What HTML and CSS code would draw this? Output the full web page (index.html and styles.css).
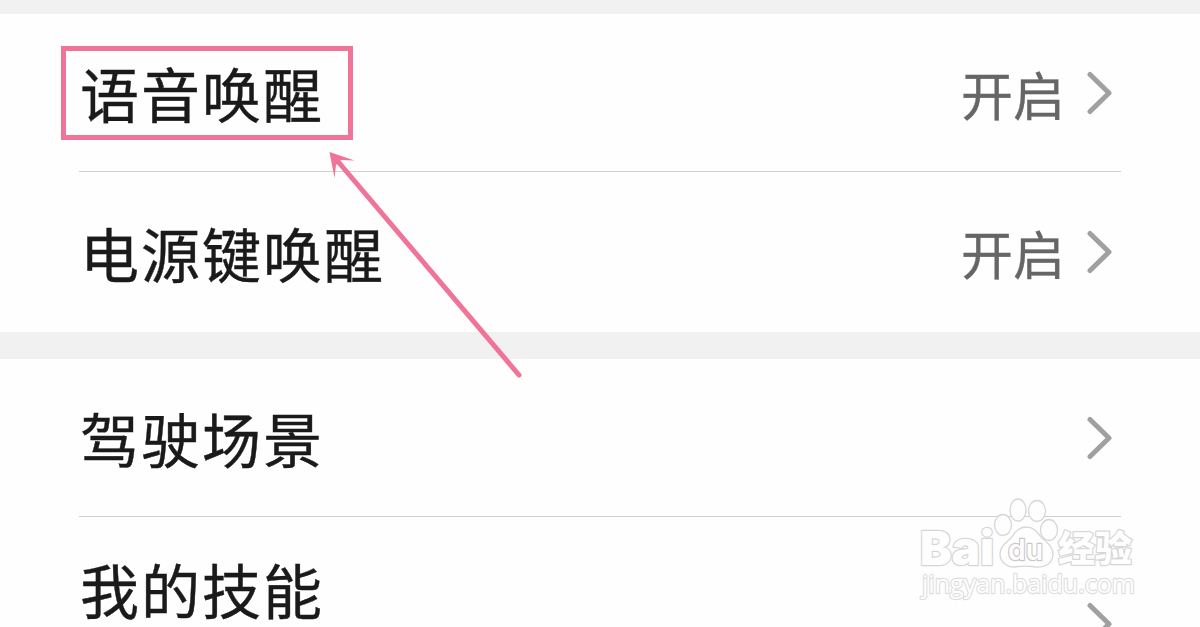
FILE: index.html
```html
<!DOCTYPE html>
<html lang="zh-CN">
<head>
	<meta charset="utf-8">
	<title>语音唤醒</title>
	<link rel="stylesheet" href="styles.css">
</head>
<body>
<div class="screen">
	<div class="group">
		<div class="row">
			<span class="label">语音唤醒</span>
			<span class="value">开启</span>
			<svg class="chevron" viewBox="0 0 26 44"><path d="M3 3.500 L22 22 L3 40.500"/></svg>
		</div>
		<div class="row">
			<span class="label">电源键唤醒</span>
			<span class="value">开启</span>
			<svg class="chevron" viewBox="0 0 26 44"><path d="M3 3.500 L22 22 L3 40.500"/></svg>
		</div>
	</div>
	<div class="group">
		<div class="row">
			<span class="label">驾驶场景</span>
			<svg class="chevron" viewBox="0 0 26 44"><path d="M3 3.500 L22 22 L3 40.500"/></svg>
		</div>
		<div class="row tall">
			<span class="label">我的技能</span>
			<svg class="chevron" viewBox="0 0 26 44"><path d="M3 3.500 L22 22 L3 40.500"/></svg>
		</div>
	</div>

	<!-- box and arrow pointing at the first row -->
	<div class="mark-box"></div>
	<svg class="mark-arrow" viewBox="0 0 200 236">
		<path class="line" d="M9 8 L193 225"/>
		<path class="head" d="M3.500 2 L28.500 10.500 L15 10 L10 15 L8.500 28 Z"/>
	</svg>

	<svg class="watermark" viewBox="0 0 230 110">
		<text class="wm-logo" x="10" y="70" textLength="74" lengthAdjust="spacingAndGlyphs">Bai</text>
		<ellipse cx="93" cy="30" rx="8.500" ry="10.500"/>
		<ellipse cx="108" cy="15" rx="8" ry="11"/>
		<ellipse cx="127" cy="16" rx="8.500" ry="10.500"/>
		<ellipse cx="139" cy="35" rx="8.500" ry="10.500"/>
		<path d="M116 32 C108 32 105 38 101 43 C97 47 90 51 90 59 C90 67 97 72 104 72 C111 71 119 71 126 72 C135 73 143 68 143 59 C143 51 136 47 131 42 C127 37 124 32 116 32 Z"/>
		<text class="wm-du" x="98" y="65" textLength="35" lengthAdjust="spacingAndGlyphs">du</text>
		<text class="wm-name" x="148" y="67" textLength="74" lengthAdjust="spacingAndGlyphs">经验</text>
		<text class="wm-url" x="12" y="98" textLength="213" lengthAdjust="spacingAndGlyphs">jingyan.baidu.com</text>
	</svg>
</div>
</body>
</html>
```

FILE: styles.css
```css
body {
	margin: 0;
	background: #fefefe;
	font-family: "Noto Sans CJK SC", sans-serif;
}
.screen {
	position: relative;
	height: 627px;
	overflow: hidden;
}
.group {
	border-top: 27px solid #f1f1f1;
	padding: 0 79px;
}
.group:first-child {
	border-top-width: 14px;
}
.row {
	display: flex;
	align-items: center;
	box-sizing: border-box;
	height: 160px;
	padding: 0 8px 0 1px;
}
.row:first-child {
	height: 158px;
	border-bottom: 1px solid #d0d0d0;
}
.row.tall {
	height: 214px;
}
.label {
	flex: 1;
	color: #1a1a1a;
	font-size: 59px;
	line-height: 80px;
	letter-spacing: 2px;
	padding-top: 1px;
	-webkit-text-stroke: 0.4px #1a1a1a;
}
.tall .label {
	padding-bottom: 72px;
}
.value {
	color: #666;
	font-size: 52px;
	line-height: 70px;
	margin-right: 22px;
	padding-top: 2px;
	-webkit-text-stroke: 0.3px #666;
}
.chevron {
	width: 26px;
	height: 44px;
	fill: none;
	stroke: #a0a0a0;
	stroke-width: 5;
	stroke-linecap: round;
	stroke-linejoin: round;
}
.mark-box {
	position: absolute;
	left: 61px;
	top: 46px;
	width: 282px;
	height: 84px;
	border: 5px solid #f07398;
}
.mark-arrow {
	position: absolute;
	left: 326px;
	top: 150px;
	width: 200px;
	height: 236px;
}
.mark-arrow .line {
	stroke: #f07398;
	stroke-width: 5;
	stroke-linecap: round;
}
.mark-arrow .head {
	fill: #f07398;
}
.watermark {
	position: absolute;
	left: 910px;
	top: 495px;
	width: 230px;
	height: 110px;
	fill: #fefefe;
	stroke: #d6d6d6;
	stroke-width: 1.3;
}
.watermark text {
	paint-order: stroke;
	stroke-width: 2.4;
	stroke-linejoin: round;
}
.wm-logo {
	font: 900 47px Inter, sans-serif;
}
.watermark .wm-du {
	font: 600 29px Inter, sans-serif;
	stroke: #c8c8c8;
}
.wm-name {
	font: 900 36px "Noto Sans CJK SC", sans-serif;
}
.wm-url {
	font: 400 26px "Open Sans", sans-serif;
	stroke: #dedede;
}
```
